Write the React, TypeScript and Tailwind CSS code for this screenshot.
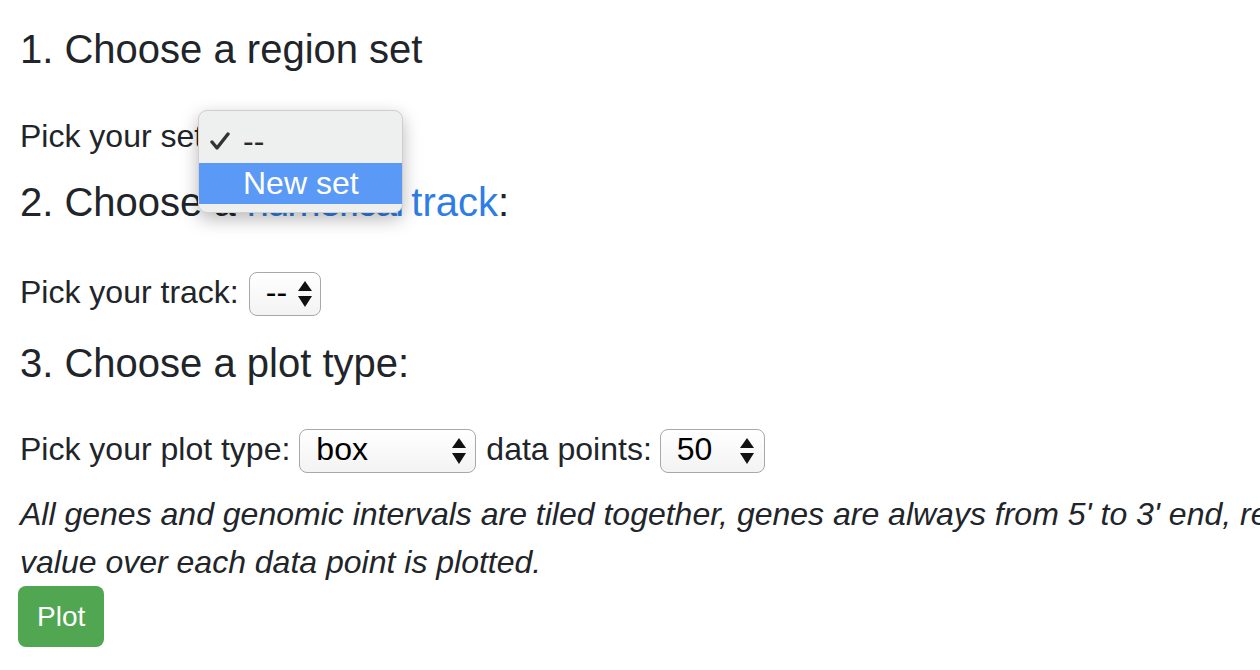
import React from "react";

const Arrows = () => (
  <svg width="14" height="27" viewBox="0 0 14 27" className="shrink-0">
    <path d="M7 0 L14 10 L0 10 Z" fill="#111" />
    <path d="M0 15 L14 15 L7 26 Z" fill="#111" />
  </svg>
);

interface SelectProps {
  value: string;
  className: string;
}

const FakeSelect = ({ value, className }: SelectProps) => (
  <div
    className={
      "inline-flex h-[44px] items-start justify-between rounded-[8px] border-[1.5px] border-[#a8a8a8] bg-gradient-to-b from-white to-[#f3f3f3] pl-[16px] text-black " +
      className
    }
  >
    <span className="leading-[38px]">{value}</span>
    <span className="mt-[8px]">
      <Arrows />
    </span>
  </div>
);

const Heading = ({ children, className = "" }: { children: React.ReactNode; className?: string }) => (
  <div className={"whitespace-nowrap text-[40px] leading-[48px] text-[#212529] " + className}>{children}</div>
);

const App = () => {
  return (
    <div
      className="relative h-[670px] w-[1260px] overflow-hidden bg-white pl-[20px] pt-[25px] text-[32px] text-[#212529]"
      style={{ fontFamily: '"Liberation Sans", Arial, sans-serif' }}
    >
      <Heading>1. Choose a region set</Heading>

      <div className="mt-[41px] flex items-baseline gap-[9px] whitespace-nowrap">
        <span className="leading-[44px]">Pick your set:</span>
        <FakeSelect value="--" className="w-[72px] pr-[8px]" />
      </div>

      <Heading className="mt-[18px]">
        2. Choose a{" "}
        <span className="text-[#2e7de6]">
          <span className="tracking-[-2px]">numerical </span>track
        </span>
        :
      </Heading>

      <div className="mt-[44px] flex items-baseline gap-[10px] whitespace-nowrap">
        <span className="leading-[44px]">Pick your track:</span>
        <FakeSelect value="--" className="w-[72px] pr-[8px]" />
      </div>

      <Heading className="mt-[23px]">3. Choose a plot type:</Heading>

      <div className="mt-[40px] flex items-baseline whitespace-nowrap">
        <span className="leading-[44px]">Pick your plot type:</span>
        <FakeSelect value="box" className="ml-[9px] w-[177px] pr-[9px]" />
        <span className="ml-[10px] leading-[44px]">data points:</span>
        <FakeSelect value="50" className="ml-[8px] w-[105px] pr-[10px]" />
      </div>

      <div className="mt-[17px] whitespace-nowrap italic leading-[48px]">
        <div>
          All genes and genomic intervals are tiled together, genes are always from 5' to 3' end, regardless of
          strand, and the mean
        </div>
        <div>value over each data point is plotted.</div>
      </div>

      <button className="-ml-[2px] flex h-[61px] items-center rounded-[8px] bg-[#51a651] px-[19px] text-[28px] text-white">
        Plot
      </button>

      {/* native popup of the first select, open */}
      <div className="absolute left-[198px] top-[110px] w-[205px] rounded-[9px] border border-[#cfcfcf] bg-[#eeefef] py-[8px] shadow-[0_6px_18px_rgba(0,0,0,0.28)]">
        <div className="relative flex h-[44px] items-center pl-[44px] text-[#2a2a2a]">
          <svg width="20" height="18" viewBox="0 0 20 18" className="absolute left-[11px] top-[13px]">
            <path d="M2 10 L7 16 L18 2" fill="none" stroke="#333" strokeWidth="3.4" strokeLinecap="round" strokeLinejoin="round" />
          </svg>
          <span className="leading-[44px]">--</span>
        </div>
        <div className="flex h-[41px] items-center bg-[#5b99f7] pl-[44px] text-white">
          <span className="leading-[41px]">New set</span>
        </div>
      </div>
    </div>
  );
};

export default App;
